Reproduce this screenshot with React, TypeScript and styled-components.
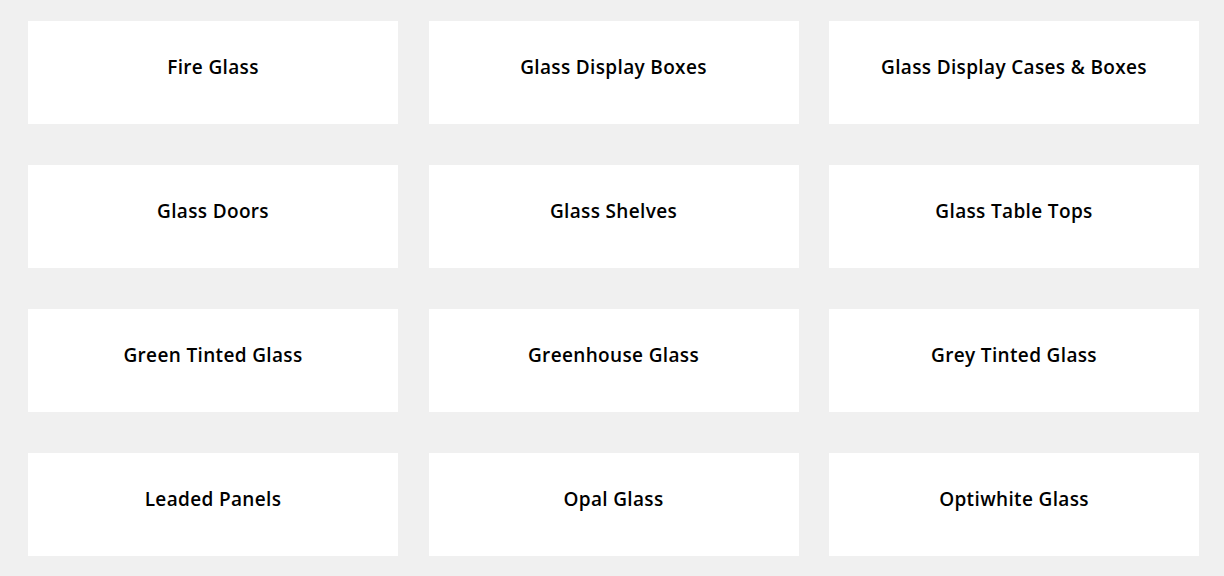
import styled, { createGlobalStyle } from 'styled-components';

const GlobalStyle = createGlobalStyle`
  html, body {
    margin: 0;
    padding: 0;
    background: #f0f0f0;
  }
  body {
    font-family: 'Open Sans', 'Liberation Sans', sans-serif;
  }
`;

const Page = styled.div`
  padding: 21px 25px 0 28px;
  width: 1171px;
`;

const Grid = styled.div`
  display: grid;
  grid-template-columns: repeat(3, 370px);
  column-gap: 30.5px;
  row-gap: 41px;
`;

const Card = styled.a`
  display: flex;
  justify-content: center;
  align-items: flex-start;
  height: 103px;
  box-sizing: border-box;
  padding-top: 33px;
  background: #ffffff;
  text-decoration: none;
`;

const Title = styled.span`
  font-size: 19px;
  font-weight: 650;
  line-height: 26px;
  color: #000000;
  letter-spacing: 0.35px;
`;

const categories = [
  'Fire Glass',
  'Glass Display Boxes',
  'Glass Display Cases & Boxes',
  'Glass Doors',
  'Glass Shelves',
  'Glass Table Tops',
  'Green Tinted Glass',
  'Greenhouse Glass',
  'Grey Tinted Glass',
  'Leaded Panels',
  'Opal Glass',
  'Optiwhite Glass',
];

export default function App() {
  return (
    <>
      <GlobalStyle />
      <Page>
        <Grid>
          {categories.map((name) => (
            <Card key={name} href="#">
              <Title>{name}</Title>
            </Card>
          ))}
        </Grid>
      </Page>
    </>
  );
}
